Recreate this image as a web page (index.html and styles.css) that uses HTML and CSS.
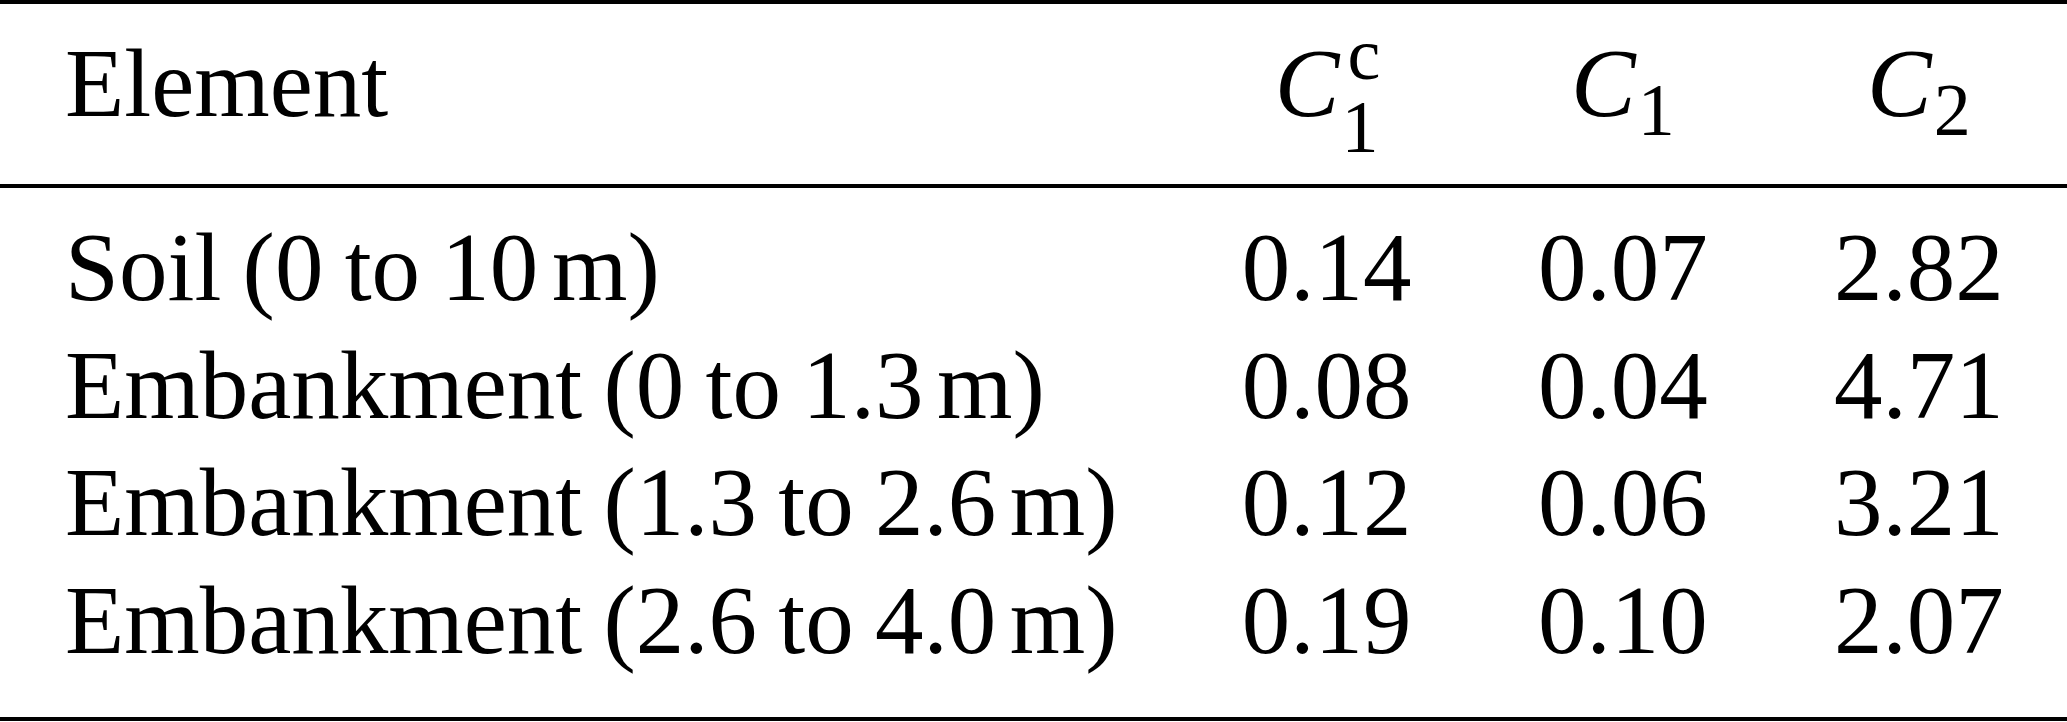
FILE: index.html
```html
<!DOCTYPE html>
<html lang="en">
<head>
<meta charset="utf-8">
<title>Table</title>
<link rel="stylesheet" href="styles.css">
</head>
<body>
<table class="data">
  <colgroup>
    <col class="col-name">
    <col class="col-num">
    <col class="col-num">
    <col class="col-num">
  </colgroup>
  <thead>
    <tr>
      <th class="name">Element</th>
      <th class="num"><i class="var">C</i><span class="sup">c</span><span class="sub sub-low">1</span></th>
      <th class="num"><i class="var">C</i><span class="sub">1</span></th>
      <th class="num"><i class="var">C</i><span class="sub">2</span></th>
    </tr>
  </thead>
  <tbody>
    <tr class="first">
      <td class="name">Soil (0 to 10<span class="thin"></span>m)</td>
      <td class="num">0.14</td>
      <td class="num">0.07</td>
      <td class="num">2.82</td>
    </tr>
    <tr>
      <td class="name">Embankment (0 to 1.3<span class="thin"></span>m)</td>
      <td class="num">0.08</td>
      <td class="num">0.04</td>
      <td class="num">4.71</td>
    </tr>
    <tr>
      <td class="name">Embankment (1.3 to 2.6<span class="thin"></span>m)</td>
      <td class="num">0.12</td>
      <td class="num">0.06</td>
      <td class="num">3.21</td>
    </tr>
    <tr class="last">
      <td class="name">Embankment (2.6 to 4.0<span class="thin"></span>m)</td>
      <td class="num">0.19</td>
      <td class="num">0.10</td>
      <td class="num">2.07</td>
    </tr>
  </tbody>
</table>
</body>
</html>
```

FILE: styles.css
```css
html, body {
  margin: 0;
  padding: 0;
  background: #fff;
}

body {
  font-family: "Liberation Serif", "Times New Roman", serif;
  font-size: 97px;
  color: #000;
}

.data {
  width: 2067px;
  table-layout: fixed;
  border-collapse: separate;
  border-spacing: 0;
  line-height: 117.4px;
  font-family: "Liberation Serif", "Times New Roman", serif;
}

.col-name { width: 1178px; }
.col-num { width: 296px; }

.data th,
.data td {
  padding: 0;
  font-weight: normal;
  white-space: nowrap;
  vertical-align: baseline;
}

.data .name {
  text-align: left;
  padding-left: 65px;
  word-spacing: -3px;
}

.data .num {
  text-align: center;
}

.data thead th {
  border-top: 4px solid #000;
  border-bottom: 4px solid #000;
  padding-top: 21px;
  padding-bottom: 42px;
}

.data tbody tr.first td {
  padding-top: 21px;
}

.data tbody tr.last td {
  padding-bottom: 38px;
  border-bottom: 4px solid #000;
}

.thin {
  display: inline-block;
  width: 0.14em;
}

.var {
  font-style: italic;
}

.sup,
.sub {
  font-size: 74px;
  line-height: 0;
}

.sup {
  vertical-align: 37px;
  margin-left: 8px;
}

.sub {
  vertical-align: -19px;
  margin-left: 2px;
}

.sub.sub-low {
  vertical-align: -36px;
  margin-left: calc(-0.444em - 6px);
}
```
